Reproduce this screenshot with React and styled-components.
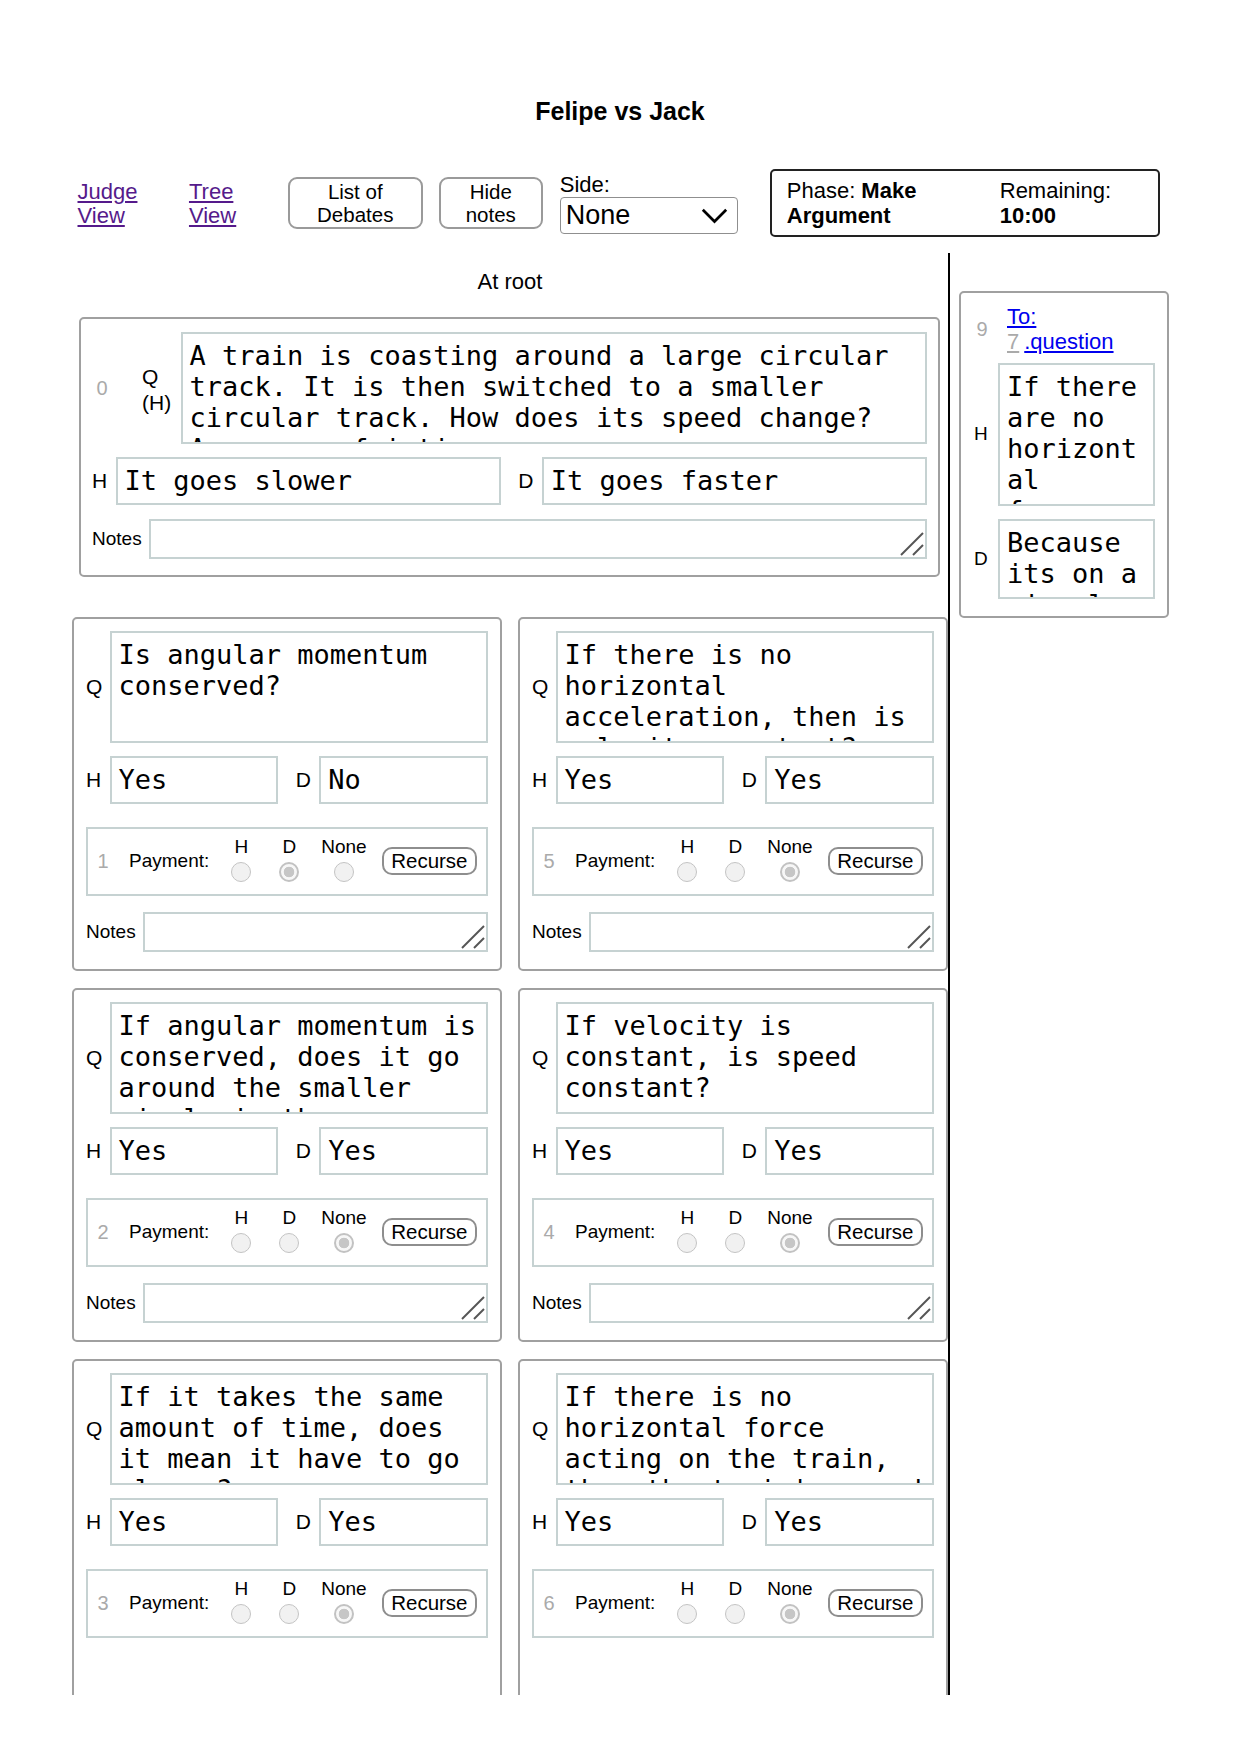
import React from "react";
import styled, { createGlobalStyle } from "styled-components";

const SANS = `"Liberation Sans", Arial, sans-serif`;
const MONO = `"DejaVu Sans Mono", monospace`;

const GlobalStyle = createGlobalStyle`
  html, body { margin: 0; padding: 0; background: #fff; }
  body { font-family: ${SANS}; color: #000; }
  * { box-sizing: border-box; }
`;

const Page = styled.div`
  width: 1240px;
  font-family: ${SANS};
`;

const Title = styled.h1`
  margin: 97px 0 0;
  font-size: 25px;
  line-height: 29px;
  font-weight: 700;
  text-align: center;
`;

const Toolbar = styled.div`
  display: flex;
  align-items: flex-start;
  height: 73px;
  margin-top: 43px;
  padding-left: 77.5px;
`;

const NavLink = styled.a`
  margin-top: 11px;
  margin-right: 51.5px;
  font-size: 22px;
  line-height: 24px;
  color: #551a8b;
  text-decoration: underline;
`;

const ToolButton = styled.button`
  margin-top: 8px;
  margin-left: ${(p) => p.$ml}px;
  width: ${(p) => p.$w}px;
  height: 52px;
  padding: 0;
  font: 20.5px/23px ${SANS};
  color: #000;
  background: #fff;
  border: 2px solid #9a9a9a;
  border-radius: 9px;
  text-align: center;
`;

const SideBlock = styled.div`
  margin-top: 4px;
  margin-left: 17px;
  width: 178px;
`;

const SideCaption = styled.div`
  font-size: 22px;
  line-height: 24px;
`;

const SelectBox = styled.div`
  display: flex;
  align-items: center;
  justify-content: space-between;
  height: 37px;
  padding: 0 9px 0 5px;
  border: 1px solid #8f8f8f;
  border-radius: 4px;
  font-size: 27px;
  line-height: 31px;
`;

const PhaseBox = styled.div`
  display: grid;
  grid-template-columns: 213px 1fr;
  margin-left: 32px;
  width: 390px;
  height: 68px;
  padding: 7px 13px 7px 15px;
  border: 2px solid #222;
  border-radius: 5px;
  font-size: 22px;
  line-height: 25px;
`;

const Main = styled.div`
  display: flex;
  height: 1442px;
  margin: 11px 0 0 72px;
`;

const LeftPane = styled.div`
  flex: none;
  width: 876px;
  overflow: hidden;
  padding-top: 16px;
`;

const Breadcrumb = styled.div`
  text-align: center;
  font-size: 22px;
  line-height: 25px;
`;

const RootCard = styled.div`
  margin: 23px 8px 0 7px;
  padding: 13px 11px 16px;
  border: 2px solid #a0a0a0;
  border-radius: 5px;
`;

const ChildGrid = styled.div`
  display: grid;
  grid-template-columns: 1fr 1fr;
  grid-auto-rows: 354px;
  column-gap: 16px;
  row-gap: 17px;
  margin-top: 40px;
`;

const Card = styled.div`
  display: flex;
  flex-direction: column;
  padding: 12px 12px 16px;
  border: 2px solid #a0a0a0;
  border-radius: 5px;
  min-width: 0;
`;

const RightPane = styled.div`
  flex: none;
  width: 230px;
  padding: 38px 9px 0;
  border-left: 2px solid #000;
`;

const SideCard = styled.div`
  width: 210px;
  padding: 11px 12px 17px 13px;
  border: 2px solid #a0a0a0;
  border-radius: 5px;
`;

const Row = styled.div`
  display: flex;
  align-items: center;
  margin-top: ${(p) => p.$mt || 0}px;
`;

const AnswerRow = styled.div`
  display: flex;
  gap: 17.5px;
  margin-top: ${(p) => p.$mt || 0}px;
`;

const Half = styled.div`
  flex: 1;
  display: flex;
  align-items: center;
  min-width: 0;
`;

const Letter = styled.span`
  flex: none;
  width: ${(p) => p.$w || 16}px;
  margin-right: ${(p) => p.$gap || 7.5}px;
  font-size: ${(p) => p.$size || 21}px;
  line-height: 24px;
`;

const IdNum = styled.span`
  flex: none;
  width: ${(p) => p.$w}px;
  text-align: center;
  color: #aaa;
  font-size: 20px;
  line-height: 23px;
`;

const QHLabel = styled.div`
  flex: none;
  width: 29px;
  margin: 0 9.5px 0 30px;
  padding-top: 4px;
  font-size: 21px;
  line-height: 26px;
`;

const TextBox = styled.textarea`
  display: block;
  flex: 1;
  min-width: 0;
  width: 100%;
  height: ${(p) => p.$h}px;
  margin: 0;
  padding: 6px 7px;
  border: 2px solid #c6d2d2;
  border-radius: 0;
  background: #fff;
  color: #000;
  font: 27px/normal ${MONO};
  overflow: hidden;
  resize: none;
  outline: none;
`;

const NotesWrap = styled.div`
  position: relative;
  flex: 1;
  min-width: 0;
`;

const ResizeGrip = styled.svg`
  position: absolute;
  right: 3px;
  bottom: 3px;
  pointer-events: none;
`;

const NotesLabel = styled.span`
  flex: none;
  margin-right: 7px;
  font-size: 19px;
  line-height: 22px;
`;

const PaymentBox = styled.div`
  display: flex;
  align-items: center;
  height: 69px;
  margin-top: 22.5px;
  border: 2px solid #c6d2d2;
`;

const PayLabel = styled.span`
  margin-left: 11px;
  font-size: 19px;
  line-height: 22px;
`;

const RadioCol = styled.label`
  display: flex;
  flex-direction: column;
  align-items: center;
  min-width: 32px;
  margin-left: 16px;
  font-size: 19px;
  line-height: 21px;
`;

const Radio = styled.input`
  appearance: none;
  -webkit-appearance: none;
  width: 20px;
  height: 20px;
  margin: 5.5px 0 4px;
  border-radius: 50%;
  border: 1px solid #c4c4c4;
  background: #f1f1f1;
  &:checked {
    border: 2px solid #c2c2c2;
    background: radial-gradient(circle, #c6c6c6 0 5px, #f7f7f7 5.6px);
  }
`;

const RecurseButton = styled.button`
  margin-left: 15px;
  height: 28px;
  padding: 0 7.5px;
  font: 20.5px/24px ${SANS};
  color: #000;
  background: #fff;
  border: 2px solid #8e8e8e;
  border-radius: 10px;
`;

const SideLink = styled.a`
  margin-left: 17px;
  font-size: 22px;
  line-height: 25px;
  color: #0000ee;
  text-decoration: underline;
`;

const IdRef = styled.span`
  display: inline-block;
  margin-right: 5px;
  color: #aaa;
  text-decoration: underline;
`;

const Chevron = () => (
  <svg width="27" height="16" viewBox="0 0 27 16" fill="none">
    <polyline points="1.8,1.8 13.5,13.5 25.2,1.8" stroke="#000" strokeWidth="2.7" />
  </svg>
);

const children = [
  { id: 1, q: "Is angular momentum conserved?", h: "Yes", d: "No", pay: "D", notes: true },
  { id: 5, q: "If there is no horizontal acceleration, then is velocity constant?", h: "Yes", d: "Yes", pay: "None", notes: true },
  { id: 2, q: "If angular momentum is conserved, does it go around the smaller circle in the same time?", h: "Yes", d: "Yes", pay: "None", notes: true },
  { id: 4, q: "If velocity is constant, is speed constant?", h: "Yes", d: "Yes", pay: "None", notes: true },
  { id: 3, q: "If it takes the same amount of time, does it mean it have to go slower?", h: "Yes", d: "Yes", pay: "None", notes: false },
  { id: 6, q: "If there is no horizontal force acting on the train, then the train's speed is constant?", h: "Yes", d: "Yes", pay: "None", notes: false },
];

const Answers = ({ h, d, mt }) => (
  <AnswerRow $mt={mt}>
    <Half>
      <Letter>H</Letter>
      <TextBox $h={48} readOnly defaultValue={h} />
    </Half>
    <Half>
      <Letter>D</Letter>
      <TextBox $h={48} readOnly defaultValue={d} />
    </Half>
  </AnswerRow>
);

const Notes = ({ mt }) => (
  <Row $mt={mt}>
    <NotesLabel>Notes</NotesLabel>
    <NotesWrap>
      <TextBox $h={40} defaultValue="" />
      <ResizeGrip width="24" height="24" viewBox="0 0 24 24">
        <line x1="1" y1="23" x2="23" y2="1" stroke="#555" strokeWidth="2" />
        <line x1="13" y1="23" x2="23" y2="13" stroke="#555" strokeWidth="2" />
      </ResizeGrip>
    </NotesWrap>
  </Row>
);

const ChildCard = ({ c }) => (
  <Card>
    <Row>
      <Letter>Q</Letter>
      <TextBox $h={112} readOnly defaultValue={c.q} />
    </Row>
    <Answers h={c.h} d={c.d} mt={13} />
    <PaymentBox>
      <IdNum $w={30}>{c.id}</IdNum>
      <PayLabel>Payment:</PayLabel>
      {["H", "D", "None"].map((opt) => (
        <RadioCol key={opt}>
          {opt}
          <Radio type="radio" name={`pay-${c.id}`} disabled defaultChecked={c.pay === opt} />
        </RadioCol>
      ))}
      <RecurseButton>Recurse</RecurseButton>
    </PaymentBox>
    {c.notes && <Notes mt={16.5} />}
  </Card>
);

export default function App() {
  return (
    <Page>
      <GlobalStyle />
      <Title>Felipe vs Jack</Title>
      <Toolbar>
        <NavLink href="#judge">Judge<br />View</NavLink>
        <NavLink href="#tree">Tree<br />View</NavLink>
        <ToolButton $ml={0} $w={135}>List of<br />Debates</ToolButton>
        <ToolButton $ml={16} $w={104}>Hide<br />notes</ToolButton>
        <SideBlock>
          <SideCaption>Side:</SideCaption>
          <SelectBox>
            <span>None</span>
            <Chevron />
          </SelectBox>
        </SideBlock>
        <PhaseBox>
          <div>Phase: <b>Make</b><br /><b>Argument</b></div>
          <div>Remaining:<br /><b>10:00</b></div>
        </PhaseBox>
      </Toolbar>
      <Main>
        <LeftPane>
          <Breadcrumb>At root</Breadcrumb>
          <RootCard>
            <Row>
              <IdNum $w={20}>0</IdNum>
              <QHLabel>Q<br />(H)</QHLabel>
              <TextBox
                $h={112}
                readOnly
                defaultValue="A train is coasting around a large circular track. It is then switched to a smaller circular track. How does its speed change? Assume no friction."
              />
            </Row>
            <Answers h="It goes slower" d="It goes faster" mt={13} />
            <Notes mt={14} />
          </RootCard>
          <ChildGrid>
            {children.map((c) => (
              <ChildCard key={c.id} c={c} />
            ))}
          </ChildGrid>
        </LeftPane>
        <RightPane>
          <SideCard>
            <Row>
              <IdNum $w={16}>9</IdNum>
              <SideLink href="#q7">To:<br /><IdRef>7</IdRef>.question</SideLink>
            </Row>
            <Row $mt={8.5}>
              <Letter $w={14} $gap={10} $size={19}>H</Letter>
              <TextBox
                $h={143}
                readOnly
                defaultValue="If there are no horizontal forces acting on the train, its speed can't change."
              />
            </Row>
            <Row $mt={13.5}>
              <Letter $w={14} $gap={10} $size={19}>D</Letter>
              <TextBox $h={80} readOnly defaultValue="Because its on a circular track it goes faster." />
            </Row>
          </SideCard>
        </RightPane>
      </Main>
    </Page>
  );
}
